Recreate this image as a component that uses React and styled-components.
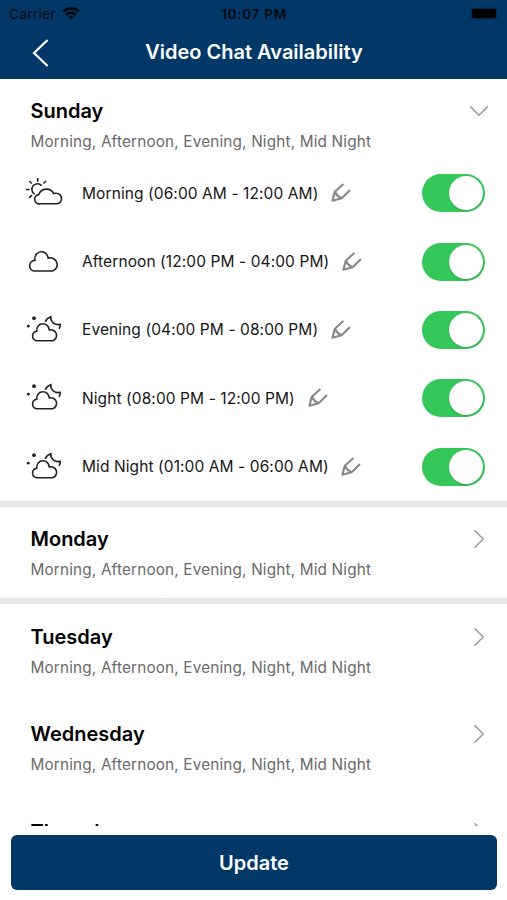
import React, { useState } from 'react';
import styled, { createGlobalStyle } from 'styled-components';

const GlobalStyle = createGlobalStyle`
  * {
    box-sizing: border-box;
  }

  body {
    margin: 0;
    background: #fff;
    font-family: Inter, "Liberation Sans", sans-serif;
  }
`;

const SUMMARY = 'Morning, Afternoon, Evening, Night, Mid Night';

const slots = [
  { id: 'morning', icon: 'sun', label: 'Morning (06:00 AM - 12:00 AM)' },
  { id: 'afternoon', icon: 'cloud', label: 'Afternoon (12:00 PM - 04:00 PM)' },
  { id: 'evening', icon: 'moon', label: 'Evening (04:00 PM - 08:00 PM)' },
  { id: 'night', icon: 'moon', label: 'Night (08:00 PM - 12:00 PM)' },
  { id: 'midnight', icon: 'moon', label: 'Mid Night (01:00 AM - 06:00 AM)' },
];

const days = [
  { name: 'Sunday', divider: true },
  { name: 'Monday', divider: true },
  { name: 'Tuesday', divider: false },
  { name: 'Wednesday', divider: false },
  { name: 'Thursday', divider: false },
];

// Weather icons for each part of the day
const SlotIcon = ({ type }) => (
  <WeatherSvg viewBox="0 0 40 32">
    {type === 'sun' && (
      <>
        <path d="M15.8 26.8H32.2A5.1 5.1 0 0 0 32.4 16.3C31.4 16.2 30.6 16.3 29.7 16.6A8.1 8.1 0 0 0 14.8 17.6A4.6 4.6 0 0 0 15.8 26.8Z" />
        <path d="M10.6 17.2A5.6 5.6 0 1 1 17.6 8.6" />
        <path d="M13.7 1V4.8M1.8 12.5H5.6M5.2 4L7.8 6.5M22 4L19.4 6.5M5.2 20.8L7.9 18.2" />
      </>
    )}
    {type === 'cloud' && (
      <path d="M10 25H28.6A6.4 6.4 0 1 0 24.2 12.2C23.3 8 20.8 5.7 17.4 5.7C13.2 5.7 10.4 9.2 10.9 14.4A5.35 5.35 0 0 0 10 25Z" />
    )}
    {type === 'moon' && (
      <>
        <path d="M12.6 26.7H28.6A5.4 5.4 0 1 0 25.4 16C24.6 12.2 22.2 9.8 18.9 9.8C15 9.8 12.3 13 12.8 17.2A4.8 4.8 0 0 0 12.6 26.7Z" />
        <path d="M21.2 7.9C22.2 5.4 24 3.6 26.8 2.7C26.2 7.6 30.6 11.4 36.2 10.4C36.4 12 36 13.4 35 14.8" />
        <circle className="dot" cx="10" cy="4.2" r="1.9" />
        <circle className="dot" cx="4.3" cy="12.2" r="1.4" />
      </>
    )}
  </WeatherSvg>
);

const StatusBar = () => (
  <Status>
    <Carrier>
      Carrier
      <svg width="18" height="13" viewBox="0 0 18 13" fill="none" stroke="#000" strokeWidth="2.7">
        <path d="M1 4.4C5.6 0.3 12.4 0.3 17 4.4" />
        <path d="M4 7.9C7 5.2 11 5.2 14 7.9" />
        <path d="M9 12.6L6.3 9.9C7.9 8.5 10.1 8.5 11.7 9.9Z" fill="#000" stroke="none" />
      </svg>
    </Carrier>
    <Clock>10:07 PM</Clock>
    <Battery />
  </Status>
);

const App = () => {
  const [openDay, setOpenDay] = useState('Sunday');
  const [active, setActive] = useState(slots.map(s => s.id));

  const toggle = id =>
    setActive(active.includes(id) ? active.filter(a => a !== id) : [...active, id]);

  return (
    <Screen>
      <GlobalStyle />
      <Header>
        <StatusBar />
        <NavBar>
          <BackButton aria-label="Back">
            <svg width="18" height="30" viewBox="0 0 18 30" fill="none" stroke="#fff" strokeWidth="2.2">
              <path d="M16.6 2L3 15L16.6 28" />
            </svg>
          </BackButton>
          <NavTitle>Video Chat Availability</NavTitle>
        </NavBar>
      </Header>

      <DayList>
        {days.map(day => {
          const open = openDay === day.name;
          return (
            <Day key={day.name} $divider={day.divider}>
              <DayHead $open={open} onClick={() => setOpenDay(open ? '' : day.name)}>
                <div>
                  <DayName>{day.name}</DayName>
                  <DaySummary>{SUMMARY}</DaySummary>
                </div>
                <Chevron $open={open} viewBox="0 0 20 20">
                  <path d="M5.4 1.2L14.2 10L5.4 18.8" />
                </Chevron>
              </DayHead>
              {open && slots.map(slot => (
                <Slot key={slot.id}>
                  <SlotIcon type={slot.icon} />
                  <SlotLabel>{slot.label}</SlotLabel>
                  <Pencil viewBox="0 0 20 20">
                    <path d="M12.4 0.9L3.8 8.8L1.4 17.8L10.6 15.2L19 7" />
                    <path d="M3.8 8.8C5 11.4 7.6 14 10.6 15.2" />
                  </Pencil>
                  <Switch $on={active.includes(slot.id)} onClick={() => toggle(slot.id)}>
                    <Knob />
                  </Switch>
                </Slot>
              ))}
            </Day>
          );
        })}
      </DayList>

      <Footer>
        <UpdateButton>Update</UpdateButton>
      </Footer>
    </Screen>
  );
};

const Screen = styled.div`
  display: flex;
  flex-direction: column;
  width: 507px;
  height: 900px;
  overflow: hidden;
`;

const Header = styled.header`
  height: 79px;
  flex-shrink: 0;
  background: #023868;
`;

const Status = styled.div`
  display: grid;
  grid-template-columns: 1fr auto 1fr;
  align-items: center;
  height: 27px;
  padding: 0 10px 0 9px;
  color: #000;
`;

const Carrier = styled.div`
  display: flex;
  align-items: center;
  gap: 6px;
  font-size: 13.5px;
  letter-spacing: 0.35px;
  opacity: 0.85;
`;

const Clock = styled.div`
  padding-left: 2px;
  font-size: 13.5px;
  font-weight: 600;
  letter-spacing: 0.72px;
  opacity: 0.85;
`;

const Battery = styled.div`
  justify-self: end;
  width: 24px;
  height: 9px;
  margin-right: 1px;
  border-radius: 2px;
  background: #000;
  box-shadow: 0 0 2px 1px rgba(0, 0, 0, 0.4);
`;

const NavBar = styled.div`
  display: grid;
  grid-template-columns: 60px 1fr 60px;
  align-items: center;
  height: 51px;
`;

const BackButton = styled.button`
  display: flex;
  padding: 0 0 0 31px;
  border: 0;
  background: none;
`;

const NavTitle = styled.h1`
  margin: 0;
  padding-left: 1px;
  text-align: center;
  font-size: 20px;
  font-weight: 600;
  line-height: 25px;
  color: #fff;
`;

const DayList = styled.main`
  height: 747px;
  flex-shrink: 0;
  overflow: hidden;
`;

const Day = styled.section`
  border-bottom: 6px solid ${props => (props.$divider ? '#e9e9e9' : 'transparent')};
`;

const DayHead = styled.div`
  display: flex;
  justify-content: space-between;
  height: ${props => (props.$open ? '80px' : '91.7px')};
  padding: 20.4px 18px 0 30.5px;
`;

const DayName = styled.h2`
  margin: 0 0 8.8px;
  font-size: 20px;
  font-weight: 600;
  line-height: 24px;
  color: #000;
`;

const DaySummary = styled.p`
  margin: 0;
  font-size: 15.3px;
  letter-spacing: 0.17px;
  line-height: 20px;
  color: #6a6a6a;
`;

const Chevron = styled.svg`
  width: 20px;
  height: 20px;
  margin-top: ${props => (props.$open ? '1.6px' : '2px')};
  fill: none;
  stroke: #999;
  stroke-width: 1.5;
  transform: rotate(${props => (props.$open ? '90deg' : '0deg')});
`;

const Slot = styled.div`
  display: flex;
  align-items: center;
  height: 68.35px;
  padding: 0 22px 0 24px;
`;

const WeatherSvg = styled.svg`
  width: 40px;
  height: 32px;
  flex-shrink: 0;
  margin-right: 18px;
  fill: none;
  stroke: #222;
  stroke-width: 1.6;

  .dot {
    fill: #222;
    stroke: none;
  }
`;

const SlotLabel = styled.span`
  font-size: 15.5px;
  letter-spacing: 0.09px;
  color: #151515;
  white-space: nowrap;
`;

const Pencil = styled.svg`
  width: 20px;
  height: 20px;
  margin-left: 12.7px;
  fill: none;
  stroke: #888;
  stroke-width: 2.1;
  stroke-linejoin: round;
`;

const Switch = styled.button`
  display: flex;
  align-items: center;
  justify-content: ${props => (props.$on ? 'flex-end' : 'flex-start')};
  width: 63px;
  height: 38px;
  margin-left: auto;
  padding: 0 2px;
  border: 0;
  border-radius: 19px;
  background: ${props => (props.$on ? '#34c759' : '#e9e9ea')};
`;

const Knob = styled.span`
  width: 34px;
  height: 34px;
  border-radius: 50%;
  background: #fff;
  box-shadow: 0 1px 2px rgba(0, 0, 0, 0.15);
`;

const Footer = styled.footer`
  padding: 9px 10px 10px 11px;
`;

const UpdateButton = styled.button`
  display: block;
  width: 100%;
  height: 55px;
  padding: 1px 0 0;
  border: 0;
  border-radius: 6px;
  background: #023868;
  font-family: inherit;
  font-size: 20px;
  font-weight: 600;
  color: #fff;
`;

export default App;
